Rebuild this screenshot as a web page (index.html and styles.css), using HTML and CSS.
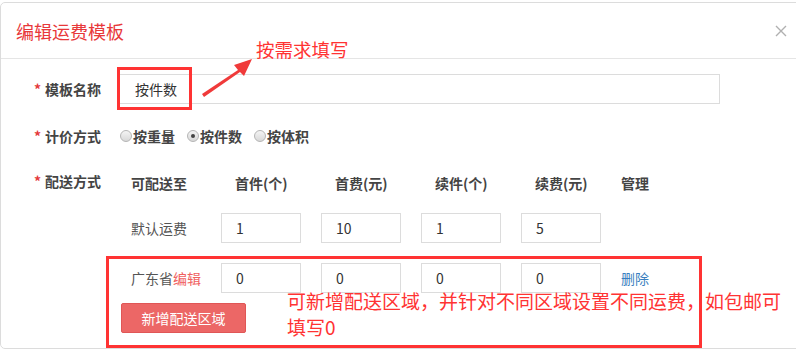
FILE: index.html
```html
<!DOCTYPE html>
<html lang="zh-CN">
<head>
  <meta charset="UTF-8">
  <meta name="viewport" content="width=device-width, initial-scale=1">
  <title>编辑运费模板</title>
  <link rel="stylesheet" href="styles.css">
</head>
<body>
  <div class="modal">
    <div class="modal-header">
      <h3>编辑运费模板</h3>
      <span class="close">
        <svg viewBox="0 0 12 12" width="12" height="12">
          <path d="M1,1L11,11M11,1L1,11" stroke="#b0b0b0" stroke-width="1.4" fill="none" />
        </svg>
      </span>
    </div>

    <div class="modal-body">
      <div class="form-row">
        <label class="form-label"><i>*</i>模板名称</label>
        <input class="text-input" type="text" value="按件数">
      </div>

      <div class="form-row">
        <label class="form-label"><i>*</i>计价方式</label>
        <div class="radios">
          <span class="radio"><span class="dot"></span>按重量</span>
          <span class="radio checked"><span class="dot"></span>按件数</span>
          <span class="radio"><span class="dot"></span>按体积</span>
        </div>
      </div>

      <div class="form-row top">
        <label class="form-label"><i>*</i>配送方式</label>
        <div class="ship">
          <div class="ship-row head">
            <span>可配送至</span>
            <span class="pad">首件(个)</span>
            <span class="pad">首费(元)</span>
            <span class="pad">续件(个)</span>
            <span class="pad">续费(元)</span>
            <span>管理</span>
          </div>
          <div class="ship-row">
            <span class="area">默认运费</span>
            <input class="num" type="text" value="1">
            <input class="num" type="text" value="10">
            <input class="num" type="text" value="1">
            <input class="num" type="text" value="5">
            <span></span>
          </div>
          <div class="ship-row region">
            <span class="area">广东省<a class="edit">编辑</a></span>
            <input class="num" type="text" value="0">
            <input class="num" type="text" value="0">
            <input class="num" type="text" value="0">
            <input class="num" type="text" value="0">
            <a class="del">删除</a>
          </div>
          <button class="add-btn">新增配送区域</button>
        </div>
      </div>
    </div>
  </div>

  <!-- annotations drawn over the screenshot -->
  <div class="mark mark-name"></div>
  <div class="mark mark-region"></div>
  <svg class="arrow" viewBox="0 0 60 45" width="60" height="45">
    <polygon points="2,37 38,13 34,8 52,2 44,19 40,15 4,40" fill="#f03a3a" />
  </svg>
  <div class="note note-top">按需求填写</div>
  <div class="note note-region">可新增配送区域，并针对不同区域设置不同运费，如包邮可<br>填写0</div>
</body>
</html>
```

FILE: styles.css
```css
body {
  margin: 0;
  padding: 2px 0 0;
  background: #fff;
  font-family: "Microsoft YaHei", "Noto Sans CJK SC", "Liberation Sans", sans-serif;
  font-size: 14px;
  color: #555;
  width: 796px;
  height: 350px;
  overflow: hidden;
  position: relative;
}
.modal {
  width: 820px;
  height: 345px;
  border: 1px solid #dcdcdc;
  border-radius: 5px;
  background: #fff;
}
.modal-header {
  height: 55px;
  border-bottom: 1px solid #e5e5e5;
  display: flex;
  align-items: center;
  padding: 0 15px;
  width: 766px;
}
.modal-header h3 {
  margin: 0;
  flex: 1;
  font-size: 18px;
  font-weight: 400;
  color: #e8383a;
}
.close {
  display: flex;
  margin-right: -5px;
}
.modal-body {
  padding-top: 15px;
}
.form-row {
  display: flex;
  align-items: center;
  margin-bottom: 17px;
}
.form-row.top {
  align-items: flex-start;
}
.form-label {
  width: 100px;
  margin-right: 18px;
  text-align: right;
  font-weight: 700;
  color: #444;
  line-height: 30px;
}
.form-row.top .form-label {
  line-height: 26px;
}
.form-label i {
  font-style: normal;
  color: #e4393c;
  margin-right: 4px;
}
.text-input {
  width: 601px;
  height: 30px;
  box-sizing: border-box;
  border: 1px solid #dcdcdc;
  padding: 0 15px;
  font: inherit;
  color: #333;
  outline: none;
}
.radios {
  display: flex;
  gap: 12px;
  margin-left: 1px;
  height: 30px;
  align-items: center;
}
.radio {
  display: flex;
  align-items: center;
  font-weight: 700;
  color: #444;
}
.radio .dot {
  width: 10px;
  height: 10px;
  border: 1px solid #b5b5b5;
  border-radius: 50%;
  background: linear-gradient(#f4f4f4, #d8d8d8);
  margin-right: 1px;
  position: relative;
}
.radio.checked .dot::after {
  content: "";
  position: absolute;
  left: 3px;
  top: 3px;
  width: 4px;
  height: 4px;
  border-radius: 50%;
  background: #444;
}
.ship {
  display: flex;
  flex-direction: column;
}
.ship-row {
  display: grid;
  grid-template-columns: 90px 100px 100px 100px 100px 60px;
  align-items: center;
  height: 30px;
  margin-bottom: 15px;
  padding-left: 12px;
}
.ship-row.head {
  font-weight: 700;
  color: #444;
}
.ship-row.region {
  margin-top: 5px;
  margin-bottom: 10px;
}
.ship-row .pad {
  padding-left: 14px;
}
.num {
  width: 80px;
  height: 30px;
  box-sizing: border-box;
  border: 1px solid #dcdcdc;
  padding: 0 14px;
  font: inherit;
  color: #333;
  outline: none;
}
.edit {
  color: #f06060;
}
.del {
  color: #3a7fc0;
}
.add-btn {
  width: 125px;
  height: 30px;
  margin-left: 2px;
  border: 1px solid #e05656;
  border-radius: 2px;
  background: #ec6766;
  color: #fff;
  font: inherit;
}
.mark {
  position: absolute;
  border: 3px solid #f33;
  box-sizing: border-box;
}
.mark-name {
  left: 117px;
  top: 67px;
  width: 75px;
  height: 43px;
}
.mark-region {
  left: 106px;
  top: 256px;
  width: 596px;
  height: 92px;
}
.arrow {
  position: absolute;
  left: 200px;
  top: 57px;
}
.note {
  position: absolute;
  color: #f33;
  font-size: 19px;
  line-height: 26px;
}
.note-top {
  left: 256px;
  top: 36px;
  font-size: 18.5px;
}
.note-region {
  left: 287px;
  top: 288px;
}
```
